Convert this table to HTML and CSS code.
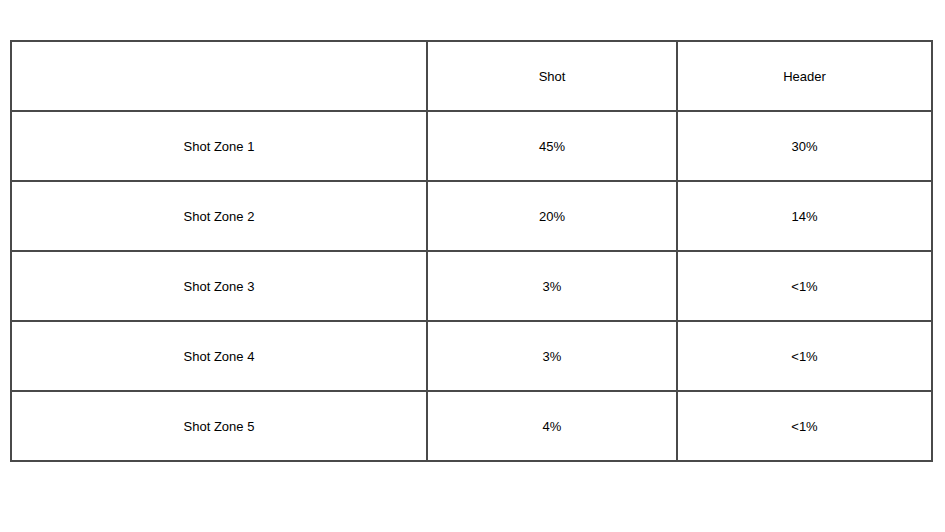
FILE: index.html
```html
<!DOCTYPE html>
<html>
<head>
<meta charset="utf-8">
<link rel="stylesheet" href="styles.css">
</head>
<body>
<div class="table">
  <div class="cell"></div>
  <div class="cell">Shot</div>
  <div class="cell">Header</div>
  <div class="cell">Shot Zone 1</div>
  <div class="cell">45%</div>
  <div class="cell">30%</div>
  <div class="cell">Shot Zone 2</div>
  <div class="cell">20%</div>
  <div class="cell">14%</div>
  <div class="cell">Shot Zone 3</div>
  <div class="cell">3%</div>
  <div class="cell">&lt;1%</div>
  <div class="cell">Shot Zone 4</div>
  <div class="cell">3%</div>
  <div class="cell">&lt;1%</div>
  <div class="cell">Shot Zone 5</div>
  <div class="cell">4%</div>
  <div class="cell">&lt;1%</div>
</div>
</body>
</html>
```
FILE: styles.css
```css
html, body {
  margin: 0;
  background: #fff;
}
body {
  padding: 40px 0 0 10px;
  font-family: "Liberation Sans", Arial, sans-serif;
  font-size: 13px;
  color: #000;
}
.table {
  display: grid;
  grid-template-columns: 414px 248px 253px;
  grid-auto-rows: 68px;
  gap: 2px;
  padding: 2px;
  width: max-content;
  background: #4a4a4a;
}
.cell {
  background: #fff;
  display: flex;
  align-items: center;
  justify-content: center;
}
```
